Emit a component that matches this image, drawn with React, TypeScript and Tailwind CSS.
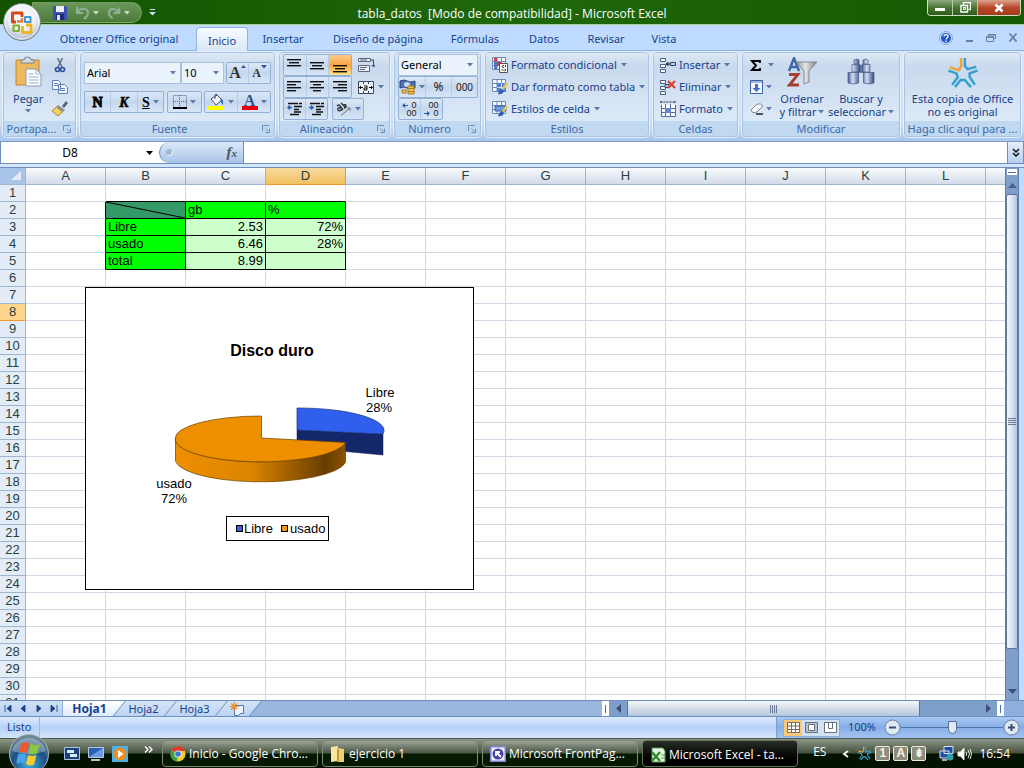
import type { ReactNode } from 'react';

const COLUMNS = ['A', 'B', 'C', 'D', 'E', 'F', 'G', 'H', 'I', 'J', 'K', 'L'];
const ROWS = Array.from({ length: 31 }, (_, i) => i + 1);

const CELLS: Record<string, string> = {
  C2: 'gb',
  D2: '%',
  B3: 'Libre',
  C3: '2.53',
  D3: '72%',
  B4: 'usado',
  C4: '6.46',
  D4: '28%',
  B5: 'total',
  C5: '8.99',
};

const RIBBON_TABS = [
  { label: 'Obtener Office original', width: 'w-[154px]' },
  { label: 'Inicio', width: 'w-[52px]', active: true },
  { label: 'Insertar', width: 'w-[70px]' },
  { label: 'Diseño de página', width: 'w-[120px]' },
  { label: 'Fórmulas', width: 'w-[74px]' },
  { label: 'Datos', width: 'w-[64px]' },
  { label: 'Revisar', width: 'w-[60px]' },
  { label: 'Vista', width: 'w-[56px]' },
];

function Caret({ className = 'text-[#5a7ba8]' }: { className?: string }) {
  return (
    <svg width="6" height="4" viewBox="0 0 6 4" className={`shrink-0 ${className}`}>
      <path d="M0 0h6L3 3.500z" fill="currentColor" />
    </svg>
  );
}

/* ---------- title bar ---------- */

function OfficeOrb() {
  return (
    <button aria-label="Botón de Office" className="absolute top-[2px] left-[2px] z-20 size-10">
      <svg width="40" height="40" viewBox="0 0 40 40">
        <defs>
          <radialGradient id="orb" cx="50%" cy="35%" r="65%">
            <stop offset="0" stopColor="#fff" />
            <stop offset="0.6" stopColor="#e9edf4" />
            <stop offset="1" stopColor="#a9b6ca" />
          </radialGradient>
        </defs>
        <circle cx="20" cy="20" r="18.500" fill="url(#orb)" stroke="#6f8277" />
        <circle cx="20" cy="20" r="17" fill="none" stroke="#fff" strokeOpacity="0.8" />
        <g fill="none" strokeLinejoin="round">
          <path d="M14 20H10.500V11H20v4" stroke="#d9481a" strokeWidth="3" />
          <path d="M20 16v3.500h-5" stroke="#f07a35" strokeWidth="2.400" />
          <path d="M23 15h5.500v5H23z" stroke="#3c9ad6" strokeWidth="2" />
          <path d="M11.500 23.500h5.500v5.500h-5.500z" stroke="#7fb23a" strokeWidth="2.200" />
          <path d="M20.500 24v6.500h8.500V23h-5" stroke="#f2b41c" strokeWidth="2.800" />
        </g>
      </svg>
    </button>
  );
}

function TitleBar() {
  return (
    <header className="relative flex h-[25px] shrink-0 items-center border-b border-[#a9cf90] bg-linear-to-r from-[#145200] via-[#1f680a] to-[#175803]">
      <OfficeOrb />
      <div className="absolute top-[2px] left-8 flex h-[21px] w-[110px] items-center rounded-r-full border border-[#8fae7b]/60 bg-linear-to-b from-[#6a965a] to-[#4b7b3b] pl-5">
        <button aria-label="Guardar" className="mr-[8px]">
          <svg width="14" height="14" viewBox="0 0 14 14">
            <path d="M0 0h13l1 1v13H0z" fill="#3d4fb0" />
            <path d="M3 0h8v6H3z" fill="#e9eefb" />
            <path d="M3 8h8v6H3z" fill="#1f2c78" />
            <path d="M4 9h3v5H4z" fill="#dfe5f8" />
          </svg>
        </button>
        <button aria-label="Deshacer" className="flex items-center gap-[3px]">
          <svg width="15" height="14" viewBox="0 0 15 14" fill="none">
            <path d="M2 1v6h6M3 6c3-5 10-4 10 1 0 3-2 4-4 6" stroke="#8fae93" strokeWidth="2.200" />
          </svg>
          <Caret className="text-[#cbdcc4]" />
        </button>
        <button aria-label="Rehacer" className="ml-[8px] flex items-center gap-[3px]">
          <svg width="14" height="14" viewBox="0 0 15 14" fill="none">
            <path d="M13 1v6H7M12 6C9 1 2 2 2 7c0 3 2 4 4 6" stroke="#8fae93" strokeWidth="2.200" />
          </svg>
          <Caret className="text-[#cbdcc4]" />
        </button>
      </div>
      <button aria-label="Personalizar barra de acceso rápido" className="absolute top-[9px] left-[149px]">
        <svg width="7" height="7" viewBox="0 0 7 7" fill="#c9dcf5">
          <path d="M1 0h5v1H1zM0 3h7L3.500 6.500z" />
        </svg>
      </button>
      <h1 className="w-full pt-1 text-center font-['Open_Sans',sans-serif] text-[12px] leading-4 font-normal text-white">
        tabla_datos&nbsp; [Modo de compatibilidad] - Microsoft Excel
      </h1>
      <div className="absolute top-0 right-[3px] flex h-[16px] overflow-hidden rounded-b border border-t-0 border-[#cfdcc6]">
        <button aria-label="Minimizar" className="flex w-[25px] items-end justify-center border-r border-[#b9c9ad] bg-linear-to-b from-[#8fab80] via-[#4a7535] via-50% to-[#2c5f17] pb-[4px]">
          <span className="h-[3px] w-[10px] bg-white" />
        </button>
        <button aria-label="Restaurar" className="flex w-[25px] items-center justify-center border-r border-[#b9c9ad] bg-linear-to-b from-[#8fab80] via-[#4a7535] via-50% to-[#2c5f17]">
          <svg width="11" height="11" viewBox="0 0 11 11" fill="none" stroke="#fff">
            <path d="M3.500 2.500v-2h7v7h-2M1 3.500h6.500V10H1z" strokeWidth="1.400" />
            <path d="M3.500 5.500h2v2h-2z" />
          </svg>
        </button>
        <button aria-label="Cerrar" className="flex w-[42px] items-center justify-center bg-linear-to-b from-[#dba28c] via-[#b8482b] via-50% to-[#a13a18]">
          <svg width="12" height="10" viewBox="0 0 12 10">
            <path d="M2.500 1.500l7 7M9.500 1.500l-7 7" stroke="#fff" strokeWidth="2.600" />
          </svg>
        </button>
      </div>
    </header>
  );
}

/* ---------- ribbon ---------- */

function RibbonTabs() {
  return (
    <nav className="flex h-[25px] shrink-0 items-end bg-[#bfdbff] pl-[42px]">
      {RIBBON_TABS.map(({ label, width, active }) => (
        <button
          key={label}
          className={`h-[24px] shrink-0 whitespace-nowrap pt-[2px] text-center text-[11px] leading-4 text-[#15428b] ${width} ${
            active ? 'relative top-px rounded-t border border-b-0 border-[#8db2e3] bg-linear-to-b from-[#f6fbff] to-[#dbe6f4]' : ''
          }`}
        >
          {label}
        </button>
      ))}
      <div className="ml-auto flex h-full items-center gap-3 pr-[6px] text-[#6b7f99]">
        <button aria-label="Ayuda">
          <svg width="14" height="14" viewBox="0 0 14 14">
            <circle cx="7" cy="7" r="6.400" fill="#dce8fb" stroke="#7c9fd6" />
            <circle cx="7" cy="7" r="5" fill="#2456c4" />
            <path d="M5 5.500c0-2.500 4-2.500 4 0C9 7 7 7 7 8.500M7 9.500V11" fill="none" stroke="#fff" strokeWidth="1.400" />
          </svg>
        </button>
        <button aria-label="Minimizar libro" className="pt-1">
          <svg width="9" height="6" viewBox="0 0 9 6"><path d="M1 3h7v2H1z" fill="currentColor" /></svg>
        </button>
        <button aria-label="Restaurar libro">
          <svg width="10" height="8" viewBox="0 0 10 8" fill="none" stroke="currentColor">
            <path d="M2.500 2.500v-2h7v4h-2M.5 3h7v4.500h-7z" />
            <path d="M0 3h8M2 .8h8" strokeWidth="1.500" />
          </svg>
        </button>
        <button aria-label="Cerrar libro">
          <svg width="10" height="9" viewBox="0 0 10 9"><path d="M1.500.5l7 8M8.500.5l-7 8" stroke="currentColor" strokeWidth="1.800" /></svg>
        </button>
      </div>
    </nav>
  );
}

function Group({ title, width, launcher, children }: { title: string; width: string; launcher?: boolean; children: ReactNode }) {
  return (
    <section className={`flex h-[85px] flex-col overflow-hidden rounded border border-[#a9c3e3] shadow-[0_0_0_1px_#e6f0fc] ${width}`}>
      <div className="h-[68px] bg-linear-to-b from-[#dde8f5] via-[#c9d9ed] via-20% to-[#dce9f8]">{children}</div>
      <div className="relative flex h-[15px] items-center justify-center bg-[#c1d8f1]">
        <h2 className={`whitespace-nowrap text-[11px] leading-[15px] text-[#3e6aaa] ${launcher ? 'pr-4' : ''}`}>{title}</h2>
        {launcher && (
          <button aria-label={`Más opciones de ${title}`} className="absolute right-[4px]">
            <svg width="8" height="8" viewBox="0 0 8 8" fill="none" stroke="#6790c4">
              <path d="M.5 6V.5H7M3.500 3.500l3 3M7.500 3.500v4h-4" />
            </svg>
          </button>
        )}
      </div>
    </section>
  );
}

function Segment({ children, className = '' }: { children: ReactNode; className?: string }) {
  return (
    <div className={`flex h-[22px] divide-x divide-[#b4cae6] overflow-hidden rounded-xs border border-[#93b0d6] bg-linear-to-b from-[#dce8f6] via-[#c5d7ed] via-50% to-[#d7e6f8] ${className}`}>
      {children}
    </div>
  );
}

function IconButton({ label, active, children }: { label: string; active?: boolean; children: ReactNode }) {
  return (
    <button
      aria-label={label}
      className={`flex flex-1 items-center justify-center gap-[3px] ${active ? 'bg-linear-to-b from-[#fbc98a] via-[#fba53c] via-50% to-[#fde28a]' : ''}`}
    >
      {children}
    </button>
  );
}

function Lines({ rows }: { rows: [number, number, number][] }) {
  return (
    <svg width="15" height="16" viewBox="0 0 15 16" fill="#111">
      {rows.map(([x, y, w]) => (
        <rect key={y} x={x} y={y} width={w} height="1.400" />
      ))}
    </svg>
  );
}

function FormatSelect({ label, value, className }: { label: string; value: string; className: string }) {
  return (
    <label className={`relative flex h-[22px] items-center border border-[#abc1de] bg-[#eaf2fb] ${className}`}>
      <select aria-label={label} className="h-full w-full appearance-none px-[2px] text-[11px] text-black outline-none">
        <option>{value}</option>
      </select>
      <span className="pointer-events-none absolute right-[4px]">
        <Caret />
      </span>
    </label>
  );
}

function ClipboardGroup() {
  return (
    <Group title="Portapa..." width="w-[73px]" launcher>
      <div className="flex justify-between pt-[3px] pr-[7px] pl-[9px]">
        <button className="flex flex-col items-center text-[11px] leading-[13px] text-[#15428b]">
          <svg width="28" height="32" viewBox="0 0 28 32">
            <path d="M2 4h23v25H2z" fill="#eeb95c" stroke="#c08a3a" />
            <path d="M7 7V4h3q0-3 3.500-3T17 4h3v3z" fill="#d4dbe3" stroke="#77818f" />
            <path d="M12 13h10l5 5v12H12z" fill="#fbfdff" stroke="#8a9bb8" />
            <path d="M22 13v5h5M14.500 18h5m-5 3h10m-10 3h10m-10 3h10" fill="none" stroke="#9fb0cc" />
          </svg>
          <span className="pt-1 pb-1">Pegar</span>
          <Caret />
        </button>
        <div className="flex flex-col items-center gap-[7px] pt-[2px]">
          <button aria-label="Cortar">
            <svg width="12" height="15" viewBox="0 0 12 15" fill="none">
              <path d="M3.500 0L8 9M8.500 0L4 9" stroke="#5c6f8c" strokeWidth="1.500" />
              <circle cx="3.500" cy="11.500" r="2" stroke="#274f9e" strokeWidth="1.600" />
              <circle cx="8.500" cy="11.500" r="2" stroke="#274f9e" strokeWidth="1.600" />
            </svg>
          </button>
          <button aria-label="Copiar">
            <svg width="16" height="14" viewBox="0 0 16 14" fill="#f4f8ff" stroke="#5e7fb8">
              <path d="M.5.5h6l2 2v7h-8zM6.500 4.500h6l3 3v6h-9z" />
              <path d="M2 3.500h4m-4 2h4M8 8.500h5m-5 2h5" />
            </svg>
          </button>
          <button aria-label="Copiar formato">
            <svg width="16" height="15" viewBox="0 0 16 15">
              <path d="M10 5l4-5 2 2-4 5z" fill="#51638b" />
              <path d="M6 4l7 5-2 2-7-5z" fill="#8b909c" />
              <path d="M4.500 6l6 5L6 15 0 10z" fill="#f0d26b" stroke="#a98420" />
            </svg>
          </button>
        </div>
      </div>
    </Group>
  );
}

function FontGroup() {
  return (
    <Group title="Fuente" width="w-[195px]" launcher>
      <div className="flex flex-col gap-[7px] px-[3px] pt-[9px]">
        <div className="flex justify-between">
          <div className="flex">
            <FormatSelect label="Fuente" value="Arial" className="w-[97px]" />
            <FormatSelect label="Tamaño de fuente" value="10" className="w-[43px]" />
          </div>
          <Segment className="w-[45px] font-['Liberation_Serif',serif] font-bold text-[#333]">
            <IconButton label="Aumentar tamaño">
              <span className="flex items-start text-[16px] leading-4">A<svg width="5" height="3" viewBox="0 0 5 3"><path d="M0 3h5L2.500 0z" fill="#33539a" /></svg></span>
            </IconButton>
            <IconButton label="Disminuir tamaño">
              <span className="flex items-start text-[12px] leading-4">A<Caret className="text-[#33539a]" /></span>
            </IconButton>
          </Segment>
        </div>
        <div className="flex justify-between">
          <Segment className="w-[80px] font-['Liberation_Serif',serif] text-[14px] font-bold text-black">
            <IconButton label="Negrita"><span className="[-webkit-text-stroke:1px]">N</span></IconButton>
            <IconButton label="Cursiva"><i className="[-webkit-text-stroke:0.5px]">K</i></IconButton>
            <IconButton label="Subrayado"><u>S</u><Caret /></IconButton>
          </Segment>
          <Segment className="w-[35px]">
            <IconButton label="Bordes">
              <svg width="14" height="14" viewBox="0 0 14 14" fill="none" stroke="#51617c">
                <path d="M.5.5h13v12H.5zM6.500 0v13M0 6.500h14" strokeDasharray="1 1" />
                <path d="M0 13h14" stroke="#000" strokeWidth="2" />
              </svg>
              <Caret />
            </IconButton>
          </Segment>
          <Segment className="w-[67px]">
            <IconButton label="Color de relleno">
              <svg width="17" height="16" viewBox="0 0 17 16">
                <path d="M3 5l6-4 5 5-6 5z" fill="#f3f6fb" stroke="#44516b" />
                <path d="M7 5V1q1-2 2 0" fill="none" stroke="#44516b" />
                <path d="M12 4q4 1 3 7l-2-3z" fill="#2b66b8" />
                <path d="M0 12h16v4H0z" fill="#ff0" />
              </svg>
              <Caret />
            </IconButton>
            <IconButton label="Color de fuente">
              <span className="flex h-4 w-4 items-start justify-center border-b-4 border-red-600 font-['Liberation_Serif',serif] text-[16px] leading-[13px] font-bold text-[#33538f]">A</span>
              <Caret />
            </IconButton>
          </Segment>
        </div>
      </div>
    </Group>
  );
}

function AlignmentGroup() {
  return (
    <Group title="Alineación" width="w-[111px]" launcher>
      <div className="flex flex-col px-[3px] pt-px">
        <div className="flex gap-[6px]">
          <Segment className="w-[69px]">
            <IconButton label="Alinear arriba"><Lines rows={[[0, 2, 14], [2, 5, 10], [0, 8, 14]]} /></IconButton>
            <IconButton label="Alinear en el medio"><Lines rows={[[0, 5, 14], [2, 8, 10], [0, 11, 14]]} /></IconButton>
            <IconButton label="Alinear abajo" active><Lines rows={[[0, 8, 14], [2, 11, 10], [0, 14, 14]]} /></IconButton>
          </Segment>
          <button aria-label="Ajustar texto">
            <svg width="17" height="16" viewBox="0 0 17 16" fill="#eef4fd" stroke="#5b6678">
              <path d="M.5 1.500h12v3H.5zM.5 8.500h11v6H.5z" />
              <path d="M2 3h7M2 10.500h7m-7 2h5" />
              <path d="M13 3h2.500v6M13.500 8l2 2 1.500-2" fill="none" stroke="#33466d" />
            </svg>
          </button>
        </div>
        <div className="flex gap-[6px]">
          <Segment className="w-[69px]">
            <IconButton label="Alinear a la izquierda"><Lines rows={[[0, 2, 14], [0, 5, 9], [0, 8, 14], [0, 11, 9]]} /></IconButton>
            <IconButton label="Centrar"><Lines rows={[[0, 2, 14], [3, 5, 8], [0, 8, 14], [3, 11, 8]]} /></IconButton>
            <IconButton label="Alinear a la derecha"><Lines rows={[[0, 2, 14], [5, 5, 9], [0, 8, 14], [5, 11, 9]]} /></IconButton>
          </Segment>
          <button aria-label="Combinar y centrar" className="flex items-center gap-1">
            <svg width="16" height="13" viewBox="0 0 16 13" fill="none" stroke="#39465c">
              <path d="M.5.5h15v12H.5zM5.500 0v3m5-3v3m-5 7v3m5-3v3" fill="#eef4fd" />
              <path d="M1 6.500h4m6 0h4M6 5h3v4H6V7h3M3 5L1.500 6.500 3 8m10-3l1.500 1.500L13 8" stroke="#111" />
            </svg>
            <Caret />
          </button>
        </div>
        <div className="flex gap-1">
          <Segment className="w-[45px]">
            {['M5 5.500H1m2-2l-2 2 2 2', 'M0 5.500h4m-2-2l2 2-2 2'].map((arrow, i) => (
              <IconButton key={arrow} label={i ? 'Aumentar sangría' : 'Disminuir sangría'}>
                <svg width="16" height="14" viewBox="0 0 16 14" fill="none" stroke="#111" strokeWidth="1.500">
                  <path d="M1 1.500h14M7 4.500h8M7 7.500h5M7 10h7M3 12.500h9" strokeDasharray="10 1" />
                  <path d={arrow} stroke="#2d5fae" />
                </svg>
              </IconButton>
            ))}
          </Segment>
          <Segment className="w-[32px]">
            <IconButton label="Orientación">
              <svg width="17" height="14" viewBox="0 0 17 14" fill="none" stroke="#333" className="shrink-0">
                <path d="M6 13.500L15 6m0 0h-3m3 0v3" stroke="#777" />
                <path d="M2 4q2-2 3 0l3 4M6 6Q2 5 3 8q2 2 4-1M6 1l5 5M8 3q3-1 3 1t-2 2" strokeWidth="1.400" />
              </svg>
              <Caret />
            </IconButton>
          </Segment>
        </div>
      </div>
    </Group>
  );
}

function NumberGroup() {
  return (
    <Group title="Número" width="w-[87px]" launcher>
      <div className="flex flex-col px-[3px] pt-px">
        <FormatSelect label="Formato de número" value="General" className="w-[80px]" />
        <Segment className="w-[80px] text-[11px] text-[#222]">
          <IconButton label="Formato de contabilidad">
            <svg width="17" height="16" viewBox="0 0 17 16" className="shrink-0">
              <path d="M1 2q4-2 7 0t8 0v7q-5 2-8 0T1 9z" fill="#4a6fae" stroke="#2c4680" />
              <ellipse cx="8" cy="5.500" rx="3" ry="2.500" fill="#c9d9f2" />
              <path d="M3 11h4v3H3zM9 7h6v8H9z" fill="#f2c34c" stroke="#a8781c" />
              <path d="M9 9.500h6m-6 3h6" stroke="#a8781c" />
            </svg>
            <Caret />
          </IconButton>
          <IconButton label="Estilo porcentual"><span className="text-[12px]">%</span></IconButton>
          <IconButton label="Estilo millares"><span className="text-[10px]">000</span></IconButton>
        </Segment>
        <Segment className="w-[45px] font-['Liberation_Sans',sans-serif] text-[9px] leading-[8px] text-[#222]">
          <IconButton label="Aumentar decimales">
            <span className="flex flex-col items-end">
              <span className="flex items-center gap-[3px]"><svg width="6" height="5" viewBox="0 0 6 5"><path d="M0 2.500L3 0v2h3v1H3v2z" fill="#2d5fae" /></svg>0</span>
              <span>00</span>
            </span>
          </IconButton>
          <IconButton label="Disminuir decimales">
            <span className="flex flex-col items-end">
              <span>00</span>
              <span className="flex items-center gap-[3px]"><svg width="6" height="5" viewBox="0 0 6 5"><path d="M6 2.500L3 0v2H0v1h3v2z" fill="#2d5fae" /></svg>0</span>
            </span>
          </IconButton>
        </Segment>
      </div>
    </Group>
  );
}

function MenuButton({ icon, label }: { icon: ReactNode; label: string }) {
  return (
    <button className="flex h-[22px] items-center whitespace-nowrap text-[11px] text-[#15428b]">
      {icon}
      <span className="mr-1 ml-[3px]">{label}</span>
      <Caret />
    </button>
  );
}

function StylesGroup() {
  const sheet = <path d="M.5.5h13v12H.5zM5 0v13M9.500 0v13M0 4.500h14M0 8.500h14" fill="#f4f8ff" stroke="#6f87b5" />;
  return (
    <Group title="Estilos" width="w-[164px]">
      <div className="flex flex-col pt-px pl-[6px]">
        <MenuButton
          label="Formato condicional"
          icon={
            <svg width="16" height="16" viewBox="0 0 16 16">
              {sheet}
              <path d="M2 1h3v3H2zM5 5h4v4H5z" fill="#d23b34" />
              <path d="M2 5h3v7H2z" fill="#4b76c4" />
              <path d="M7.500 6.500h8v9h-8z" fill="#fff" stroke="#555" />
              <path d="M12 8l-2 1.500 2 1.500M9.500 13h2m2-5v2m-1 2l1.500 1-1.500 1" fill="none" stroke="#222" />
            </svg>
          }
        />
        <MenuButton
          label="Dar formato como tabla"
          icon={
            <svg width="16" height="16" viewBox="0 0 16 16">
              {sheet}
              <path d="M5 4h9v9H5z" fill="#4f80d6" />
              <path d="M9.500 4v9M5 8.500h9" stroke="#cfe0fa" />
              <path d="M15 4l-5 7" stroke="#e3c54e" strokeWidth="2.500" />
              <path d="M6 15q1-4 4-5l2 2q-2 4-6 3z" fill="#2d5bb5" />
            </svg>
          }
        />
        <MenuButton
          label="Estilos de celda"
          icon={
            <svg width="16" height="16" viewBox="0 0 16 16">
              {sheet}
              <path d="M3 5h11v5H3z" fill="#6e9ae0" stroke="#3c62a8" />
              <path d="M15 5l-5 7" stroke="#e3c54e" strokeWidth="2.500" />
              <path d="M6 15q1-4 4-5l2 2q-2 4-6 3z" fill="#2d5bb5" />
            </svg>
          }
        />
      </div>
    </Group>
  );
}

function CellsGroup() {
  const rows = <path d="M.5.5h5v3h-5zM.5 6.500h5v3h-5zM.5 11.500h5v3h-5z" fill="#fff" stroke="#4a5d82" />;
  return (
    <Group title="Celdas" width="w-[85px]">
      <div className="flex flex-col pt-px pl-[6px]">
        <MenuButton
          label="Insertar"
          icon={
            <svg width="16" height="15" viewBox="0 0 16 15">
              {rows}
              <path d="M10.500 4.500h5v3h-5z" fill="#b9cdef" stroke="#33466d" />
              <path d="M6 6h4M8.500 4L6.500 6l2 2" stroke="#000" fill="none" />
            </svg>
          }
        />
        <MenuButton
          label="Eliminar"
          icon={
            <svg width="16" height="15" viewBox="0 0 16 15">
              {rows}
              <path d="M5 4.500h4v3H5z" fill="#b9cdef" stroke="#33466d" />
              <path d="M8 1l7 7M15 1L8 8" stroke="#e0402e" strokeWidth="2.200" />
            </svg>
          }
        />
        <MenuButton
          label="Formato"
          icon={
            <svg width="16" height="16" viewBox="0 0 16 16" fill="none">
              <path d="M1.500 3.500h14v12h-14z" fill="#f7faff" />
              <path d="M.5 1h15M1 0v3m14-3v3" stroke="#333" strokeDasharray="2 1" />
              <path d="M1.500 4v11.500h14V4M5.500 3v13m5-13v13M1 7.500h15m-15 4h15" stroke="#596b90" />
              <path d="M5 7h6v5H5z" fill="#6489cf" />
            </svg>
          }
        />
      </div>
    </Group>
  );
}

function EditingGroup() {
  return (
    <Group title="Modificar" width="w-[158px]">
      <div className="flex pt-px pl-[7px]">
        <div className="flex w-[27px] flex-col">
          <button aria-label="Autosuma" className="flex h-[22px] items-center justify-between pr-[3px]">
            <svg width="12" height="11" viewBox="0 0 12 11"><path d="M10 3V1H2l4 4.500L2 10h8V8" fill="none" stroke="#000" strokeWidth="1.900" /></svg>
            <Caret />
          </button>
          <button aria-label="Rellenar" className="flex h-[22px] items-center justify-between pr-[5px]">
            <svg width="13" height="14" viewBox="0 0 13 14">
              <path d="M.5.5h12v13H.5z" fill="#f4f8ff" stroke="#3e5f9f" />
              <path d="M1 1h11v2H1z" fill="#9fb7dc" />
              <path d="M5 4h3v4h2.500l-4 4-4-4H5z" fill="#3c6fd0" />
            </svg>
            <Caret />
          </button>
          <button aria-label="Borrar" className="flex h-[22px] items-center justify-between pr-[5px]">
            <svg width="14" height="12" viewBox="0 0 14 12">
              <path d="M1 7l6-6q4-1 6 2l-6 6q-5 2-6-2z" fill="#f3f5f9" stroke="#7c8797" />
              <path d="M6 11h7" stroke="#222" strokeWidth="1.500" />
            </svg>
            <Caret />
          </button>
        </div>
        <button className="flex w-[50px] flex-col items-center whitespace-nowrap pt-[3px] text-[11px] leading-[13px] text-[#15428b]">
          <svg width="30" height="30" viewBox="0 0 30 30">
            <defs>
              <linearGradient id="funnel">
                <stop offset="0" stopColor="#8d9096" />
                <stop offset="0.450" stopColor="#e3e4e6" />
                <stop offset="1" stopColor="#7f8288" />
              </linearGradient>
            </defs>
            <path d="M2 14L7 1l5 13M4 10h6" fill="none" stroke="#4167ad" strokeWidth="2.500" />
            <path d="M2 17.500h9L2.500 28H12" fill="none" stroke="#a63f33" strokeWidth="2.800" />
            <path d="M9 5h21l-8 9v11l-5 2V14z" fill="url(#funnel)" stroke="#73777e" strokeWidth="0.800" />
          </svg>
          <span className="pt-[5px]">Ordenar</span>
          <span className="flex items-center gap-[2px]">y filtrar <Caret /></span>
        </button>
        <button className="flex w-[68px] flex-col items-center whitespace-nowrap pt-[3px] text-[11px] leading-[13px] text-[#15428b]">
          <svg width="28" height="30" viewBox="0 0 28 30">
            <defs>
              <linearGradient id="lens">
                <stop offset="0" stopColor="#4a629a" />
                <stop offset="0.400" stopColor="#d3dff4" />
                <stop offset="1" stopColor="#344b82" />
              </linearGradient>
            </defs>
            <path d="M11 8h6v8h-6z" fill="#6f87b8" />
            <g fill="url(#lens)" stroke="#35497a" strokeWidth="0.600">
              <path d="M7 3q2.500-2 5 0v4H7zM5 7.500h8V15H5zM1 15.500h10.500V26q-5 2-10.500 0z" />
              <path d="M16 3q2.500-2 5 0v4h-5zM15 7.500h8V15h-8zM16.500 15.500H27V26q-5 2-10.500 0z" />
            </g>
          </svg>
          <span className="pt-[5px]">Buscar y</span>
          <span className="flex items-center gap-[2px]">seleccionar <Caret /></span>
        </button>
      </div>
    </Group>
  );
}

function GenuineStar({ size }: { size: number }) {
  return (
    <svg width={size} height={size} viewBox="0 0 34 32" fill="none" stroke="#35a0cf" strokeWidth="2.600">
      <path d="M19 0V8.500L22 12l9-2.500" />
      <path d="M32.500 13.500L24 16.500V20l5.500 8.500" />
      <path d="M25.500 31L19 23.500h-4.500L8.500 31" />
      <path d="M5.500 28.500l6-8L10 16.500l-8.500-3" />
      <path d="M15 0v9l-2.500 4L3 10" stroke="#f0a23c" />
    </svg>
  );
}

function GenuineGroup() {
  return (
    <Group title="Haga clic aquí para ..." width="min-w-[117px] flex-1">
      <button className="flex w-full flex-col items-center whitespace-nowrap pt-1 text-[11px] leading-[13px] text-[#15428b]">
        <GenuineStar size={32} />
        <span className="pt-[3px]">Esta copia de Office</span>
        <span>no es original</span>
      </button>
    </Group>
  );
}

function Ribbon() {
  return (
    <div className="flex h-[92px] shrink-0 gap-1 border-t border-b border-t-[#8db2e3] border-b-[#7f9dc4] bg-linear-to-b from-[#dbe6f4] via-[#cfe0f4] via-80% to-[#a8c6ec] px-[3px] pt-px">
      <ClipboardGroup />
      <FontGroup />
      <AlignmentGroup />
      <NumberGroup />
      <StylesGroup />
      <CellsGroup />
      <EditingGroup />
      <GenuineGroup />
    </div>
  );
}

function FormulaBar() {
  return (
    <div className="flex h-[26px] shrink-0 border-b border-[#6d8fbd] bg-[#d6e6fa] pb-[3px]">
      <div className="flex flex-1 border-b border-[#6d8fbd] bg-white">
        <div className="flex w-[159px] items-center border-l border-[#6d8fbd] pr-1">
          <input aria-label="Cuadro de nombres" defaultValue="D8" className="min-w-0 flex-1 pr-1 text-center text-[12px] text-black outline-none" />
          <button aria-label="Lista de nombres" className="flex w-3 justify-center">
            <svg width="7" height="4" viewBox="0 0 7 4"><path d="M0 0h7L3.500 4z" /></svg>
          </button>
        </div>
        <div className="flex w-[85px] items-center justify-between rounded-l-full border border-y-0 border-[#6d8fbd] bg-linear-to-b from-[#dbe8f9] to-[#a9c4e8] pr-[6px] pl-[6px]">
          <span className="size-[7px] rounded-full bg-[#a5b7d1] shadow-[inset_-1px_-1px_1px_#eef4fd]" />
          <button aria-label="Insertar función" className="font-['Liberation_Serif',serif] text-[15px] leading-4 font-bold text-[#4c5560] italic">
            f<span className="text-[11px]">x</span>
          </button>
        </div>
        <input aria-label="Barra de fórmulas" className="min-w-0 flex-1 bg-white px-1 text-[12px] outline-none" />
        <button aria-label="Expandir barra de fórmulas" className="flex w-[17px] items-center justify-center border border-y-0 border-[#6d8fbd] bg-linear-to-b from-[#e4eefb] to-[#b7cfef]">
          <svg width="8" height="9" viewBox="0 0 8 9" fill="none" stroke="#111" strokeWidth="1.500"><path d="M1 1l3 3 3-3M1 5l3 3 3-3" /></svg>
        </button>
      </div>
    </div>
  );
}

/* ---------- sheet ---------- */

function cellStyle(col: string, row: number) {
  const inTable = 'BCD'.includes(col) && row >= 2 && row <= 5;
  if (inTable) {
    const fill = col === 'B' && row === 2 ? 'bg-[#339966]' : col === 'B' || row === 2 ? 'bg-[#00ff00]' : 'bg-[#ccffcc]';
    const align = col === 'B' || row === 2 ? 'text-left' : 'text-right';
    return `border-black ${fill} ${align}`;
  }
  const bottom = row === 1 && 'BCD'.includes(col) ? 'border-b-black' : 'border-b-[#d0d7e5]';
  const right = col === 'A' && row >= 2 && row <= 5 ? 'border-r-black' : 'border-r-[#d0d7e5]';
  return `${bottom} ${right}`;
}

function DiskChart() {
  return (
    <figure className="absolute top-[119px] left-[85px] border border-black bg-white">
      <svg width="387" height="301" viewBox="1 1 387 301" role="img" aria-label="Disco duro" className="font-['Liberation_Sans',Arial,sans-serif] text-[13px]">
        <defs>
          <linearGradient id="rim">
            <stop offset="0" stopColor="#ee8f00" />
            <stop offset="0.450" stopColor="#dc8400" />
            <stop offset="0.880" stopColor="#673d00" />
            <stop offset="1" stopColor="#8a5200" />
          </linearGradient>
        </defs>
        <text x="187" y="69" textAnchor="middle" className="text-[16px] font-bold">Disco duro</text>
        <path d="M212 143L298 147V168L212 160z" fill="#14276b" stroke="#0d1b50" strokeWidth="0.500" />
        <path d="M212 143V121A86 22.500 0 0 1 298 147z" fill="#2f5fec" stroke="#1b2f7c" strokeWidth="0.700" />
        <path d="M90.500 151A85.500 22.500 0 0 0 260.500 155.500V175.500A85.500 22.500 0 0 1 90.500 171z" fill="url(#rim)" stroke="#6b4200" strokeWidth="0.700" />
        <path d="M176.500 151V129A86 22 0 0 0 90.500 151A85.500 22.500 0 0 0 260.500 155.500z" fill="#ee8f00" stroke="#6b4200" strokeWidth="0.700" />
        <text x="295" y="110" textAnchor="middle">Libre</text>
        <text x="294" y="125" textAnchor="middle">28%</text>
        <text x="89" y="201" textAnchor="middle">usado</text>
        <text x="89" y="216" textAnchor="middle">72%</text>
        <rect x="141.500" y="229.500" width="102" height="24" fill="#fff" stroke="#000" />
        <rect x="151.500" y="238.500" width="6" height="6" fill="#3c5fe8" stroke="#000" />
        <text x="159" y="246">Libre</text>
        <rect x="196.500" y="238.500" width="6" height="6" fill="#ee9a1a" stroke="#000" />
        <text x="205" y="246">usado</text>
      </svg>
    </figure>
  );
}

function Sheet() {
  return (
    <div className="relative min-w-0 flex-1 overflow-hidden bg-white">
      <table className="w-full table-fixed border-separate border-spacing-0 font-['Liberation_Sans',Arial,sans-serif] text-[13px] leading-4 text-black">
        <colgroup>
          <col className="w-[26px]" />
          {COLUMNS.map((col) => <col key={col} className="w-[80px]" />)}
          <col />
        </colgroup>
        <thead>
          <tr className="h-[17px] text-[#27413e]">
            <th className="border-r border-b border-[#9eb6ce] bg-[#a9c4e9] p-0">
              <svg width="10" height="10" viewBox="0 0 10 10" className="mr-1 ml-auto"><path d="M10 0v9H0z" fill="#e4ecf7" /></svg>
            </th>
            {COLUMNS.map((col) => (
              <th
                key={col}
                scope="col"
                className={`border-r border-b p-0 font-normal ${
                  col === 'D' ? 'border-[#f29536] bg-linear-to-b from-[#f9d99f] to-[#f1c15f]' : 'border-[#9eb6ce] bg-linear-to-b from-[#f9fcfd] to-[#d3dbe9]'
                }`}
              >
                {col}
              </th>
            ))}
            <th className="border-b border-[#9eb6ce] bg-linear-to-b from-[#f9fcfd] to-[#d3dbe9] p-0" />
          </tr>
        </thead>
        <tbody>
          {ROWS.map((row) => (
            <tr key={row} className="h-[17px]">
              <th
                scope="row"
                className={`border-r border-b p-0 font-normal text-[#27413e] ${row === 8 ? 'border-[#f29536] bg-[#ffd58d]' : 'border-[#9eb6ce] bg-[#e4ecf7]'}`}
              >
                {row}
              </th>
              {COLUMNS.map((col) => (
                <td key={col} className={`border-r border-b px-[2px] py-0 ${cellStyle(col, row)} ${col === 'B' && row === 2 ? 'relative' : ''}`}>
                  {CELLS[col + row]}
                  {col === 'B' && row === 2 && (
                    <svg className="absolute inset-0 size-full" viewBox="0 0 79 16" preserveAspectRatio="none">
                      <path d="M0 0l79 16" stroke="#000" />
                    </svg>
                  )}
                </td>
              ))}
              <td className="border-b border-[#d0d7e5] p-0" />
            </tr>
          ))}
        </tbody>
      </table>
      <DiskChart />
    </div>
  );
}

function VerticalScroll() {
  return (
    <div className="flex w-[14px] shrink-0 flex-col border-x border-[#5d7fb5] bg-[#7f9fcb]">
      <div className="flex h-[8px] items-center justify-center border border-[#7f9fcb] bg-white">
        <span className="h-px w-2 bg-[#4d6fa8]" />
      </div>
      <button aria-label="Desplazar arriba" className="flex h-[18px] items-center justify-center">
        <svg width="9" height="5" viewBox="0 0 9 5"><path d="M0 5h9L4.500 0z" fill="#4a5f8a" /></svg>
      </button>
      <div className="flex-1">
        <div className="flex h-[93%] flex-col items-center justify-center gap-px rounded-xs border border-[#5f7396] bg-linear-to-r from-[#f3f7fc] via-[#dbe4ef] to-[#b4c6dc]">
          {[0, 1, 2, 3].map((n) => <span key={n} className="h-px w-2 bg-[#6b7d99]" />)}
        </div>
      </div>
      <button aria-label="Desplazar abajo" className="flex h-[17px] items-center justify-center">
        <svg width="9" height="5" viewBox="0 0 9 5"><path d="M0 0h9L4.500 5z" fill="#3c4f78" /></svg>
      </button>
    </div>
  );
}

function SheetTab({ width, active, label, children }: { width: string; active?: boolean; label?: string; children: ReactNode }) {
  return (
    <button aria-label={label} className={`relative flex items-center justify-center pr-1 text-[#15428b] ${width}`}>
      <span
        className={`absolute inset-y-0 right-0 -skew-x-[39deg] border-r border-[#6f8fc0] ${
          active ? '-left-3 bg-linear-to-b from-white to-[#e0ebfb]' : 'left-0 bg-linear-to-b from-[#d5e4f8] to-[#bdd3f2]'
        }`}
      />
      <span className={`relative leading-4 ${active ? 'text-[12px] font-bold' : 'text-[11px]'}`}>{children}</span>
    </button>
  );
}

function SheetBar() {
  const arrows = [
    { label: 'Primera hoja', d: 'M1 0v7M7 0v7L3 3.500z' },
    { label: 'Hoja anterior', d: 'M6 0v7L2 3.500z' },
    { label: 'Hoja siguiente', d: 'M2 0v7l4-3.500z' },
    { label: 'Última hoja', d: 'M1 0v7l4-3.500zM7 0v7' },
  ];
  return (
    <div className="flex h-[17px] shrink-0 border-y border-[#6d8fbd] bg-[#9ab7de]">
      <div className="z-10 flex w-[63px] items-center justify-around border-r border-[#8eaedb] bg-linear-to-b from-[#cfe0f8] to-[#b9d1f3]">
        {arrows.map(({ label, d }) => (
          <button key={label} aria-label={label}>
            <svg width="8" height="7" viewBox="0 0 8 7"><path d={d} fill="#1c3f86" stroke="#1c3f86" strokeWidth="0.800" /></svg>
          </button>
        ))}
      </div>
      <div className="flex flex-1 overflow-hidden">
        <SheetTab width="w-[57px]" active>Hoja1</SheetTab>
        <SheetTab width="w-[51px]">Hoja2</SheetTab>
        <SheetTab width="w-[51px]">Hoja3</SheetTab>
        <SheetTab width="w-[34px]" label="Insertar hoja de cálculo">
          <svg width="16" height="14" viewBox="0 0 16 14">
            <path d="M5.500 3.500h9v8h-3l-2 2h-4z" fill="#eef4fe" stroke="#5b78ae" />
            <path d="M5 0v9M.5 4.500h9M2 1.500l6 6m0-6l-6 6" stroke="#e88f28" strokeWidth="1.200" />
          </svg>
        </SheetTab>
      </div>
      <div className="flex w-[402px] bg-[#7f9fcb]">
        <div className="flex w-[7px] items-center justify-center bg-white"><span className="h-2 w-px bg-[#4d6fa8]" /></div>
        <button aria-label="Desplazar a la izquierda" className="flex w-[18px] items-center justify-center">
          <svg width="5" height="9" viewBox="0 0 5 9"><path d="M5 0v9L0 4.500z" fill="#3c4f78" /></svg>
        </button>
        <div className="flex w-[293px] items-center justify-center gap-px border-x border-[#5f7396] bg-linear-to-b from-[#f3f7fc] via-[#d5deea] to-[#b4c6dc]">
          {[0, 1, 2, 3].map((n) => <span key={n} className="h-2 w-px bg-[#6b7d99]" />)}
        </div>
        <div className="flex-1" />
        <button aria-label="Desplazar a la derecha" className="flex w-[18px] items-center justify-center">
          <svg width="5" height="9" viewBox="0 0 5 9"><path d="M0 0v9l5-4.500z" fill="#3c4f78" /></svg>
        </button>
        <div className="flex w-[7px] items-center justify-center bg-white"><span className="h-2 w-px bg-[#4d6fa8]" /></div>
      </div>
      <div className="w-[20px] bg-[#8fb0df]" />
    </div>
  );
}

function ZoomButton({ label, d }: { label: string; d: string }) {
  return (
    <button aria-label={label}>
      <svg width="17" height="17" viewBox="0 0 17 17" fill="none">
        <circle cx="8.500" cy="8.500" r="7.500" fill="#dfe9f6" stroke="#6b7f9d" />
        <path d={d} stroke="#3c4f6e" strokeWidth="2" />
      </svg>
    </button>
  );
}

function StatusBar() {
  return (
    <footer className="flex h-[21px] shrink-0 items-center bg-linear-to-b from-[#dcebff] via-[#b6d1f6] via-50% to-[#d5e5fb] text-[11px] text-[#15428b]">
      <div className="flex h-full w-[40px] items-center border-r border-[#9dbbe4] pl-[7px]">Listo</div>
      <div className="ml-auto flex h-full items-center border-l border-[#7d9fd0] bg-linear-to-b from-[#a9c9f5] via-[#86aee6] to-[#a3c4f2] pl-[6px]">
        <div className="flex h-[18px] border border-[#8badd9]">
          <button aria-label="Normal" className="flex w-[18px] items-center justify-center bg-[#fdc977]">
            <svg width="13" height="11" viewBox="0 0 13 11" fill="#fff" stroke="#7a6a4c"><path d="M.5.500h12v10H.5zM4.500 0v11m4-11v11M0 4h13M0 7.500h13" /></svg>
          </button>
          <button aria-label="Diseño de página" className="flex w-[19px] items-center justify-center bg-[#d3e1f4]">
            <svg width="13" height="11" viewBox="0 0 13 11" fill="#b9c2cf" stroke="#66707f"><path d="M.5.500h12v10H.5z" /><path d="M3.500 2.500h6v6h-6z" fill="#fff" /></svg>
          </button>
          <button aria-label="Vista previa de salto de página" className="flex w-[18px] items-center justify-center bg-[#d3e1f4]">
            <svg width="13" height="11" viewBox="0 0 13 11" fill="#fff" stroke="#66707f"><path d="M.5.500h12v10H.5zM4.500.500h4v6h-4zM8.500.500v6" /></svg>
          </button>
        </div>
        <button className="w-[44px] text-center text-[11px]">100%</button>
        <ZoomButton label="Alejar" d="M5 8.500h7" />
        <input
          type="range"
          aria-label="Zoom"
          className="h-4 w-[102px] appearance-none bg-transparent [&::-webkit-slider-runnable-track]:h-px [&::-webkit-slider-runnable-track]:bg-[#4f71a8] [&::-webkit-slider-thumb]:-mt-[6px] [&::-webkit-slider-thumb]:h-[13px] [&::-webkit-slider-thumb]:w-[9px] [&::-webkit-slider-thumb]:appearance-none [&::-webkit-slider-thumb]:rounded-b-full [&::-webkit-slider-thumb]:border [&::-webkit-slider-thumb]:border-[#5a6f92] [&::-webkit-slider-thumb]:bg-[#dfe9f6]"
        />
        <ZoomButton label="Acercar" d="M5 8.500h7M8.500 5v7" />
        <span className="w-1" />
      </div>
    </footer>
  );
}

/* ---------- taskbar ---------- */

const TASKS = [
  {
    label: 'Inicio - Google Chro...',
    icon: (
      <svg width="16" height="16" viewBox="0 0 16 16">
        <circle cx="8" cy="8" r="7.500" fill="#f6c92c" />
        <path d="M8 8L1.500 4.200A7.500 7.500 0 0 1 15 5H8z" fill="#dc3b2d" />
        <path d="M8 8l-1 7.500A7.500 7.500 0 0 1 1.500 4.200z" fill="#3f9d45" />
        <circle cx="8" cy="8" r="3.600" fill="#fff" />
        <circle cx="8" cy="8" r="2.800" fill="#3b78d8" />
      </svg>
    ),
  },
  {
    label: 'ejercicio 1',
    icon: (
      <svg width="16" height="16" viewBox="0 0 16 16">
        <path d="M1 1l7-1v15l-7 1z" fill="#f8e6a0" />
        <path d="M7 2l7 1v13H7z" fill="#f0d070" />
        <path d="M7 2l2 2v12l-2-1z" fill="#c99a34" />
      </svg>
    ),
  },
  {
    label: 'Microsoft FrontPag...',
    icon: (
      <svg width="16" height="16" viewBox="0 0 16 16">
        <path d="M0 0h16v16H0z" fill="#8583d8" />
        <path d="M1.500 1.500h13v13h-13z" fill="#f1f1fd" />
        <circle cx="8" cy="8" r="5.500" fill="#4644a8" />
        <path d="M6 10V6h4M6 6l5 5" stroke="#fff" strokeWidth="1.800" fill="none" />
      </svg>
    ),
  },
  {
    label: 'Microsoft Excel - ta...',
    active: true,
    icon: (
      <svg width="16" height="16" viewBox="0 0 16 16">
        <path d="M2 1h11l2 3v11H2z" fill="#e7f4e4" stroke="#4d9d45" />
        <path d="M2 5l8 9M10 5l-8 9" stroke="#2f8a2c" strokeWidth="2.400" />
        <path d="M11 8h4m-4 3h4" stroke="#4d9d45" />
      </svg>
    ),
  },
];

function StartOrb() {
  return (
    <button aria-label="Inicio" className="absolute -top-[6px] left-[8px] z-10 size-[42px]">
      <svg width="42" height="42" viewBox="0 0 42 42">
        <defs>
          <radialGradient id="start" cx="50%" cy="75%" r="70%">
            <stop offset="0" stopColor="#3fb5e0" />
            <stop offset="0.600" stopColor="#1d4f83" />
            <stop offset="1" stopColor="#6a8795" />
          </radialGradient>
        </defs>
        <circle cx="21" cy="21" r="19.500" fill="url(#start)" stroke="#a7b7b5" />
        <path d="M4 18A17.500 17.500 0 0 1 38 18Q21 24 4 18z" fill="#fff" fillOpacity="0.300" />
        <path d="M13 11q4-3 8-1l-2 10q-4-2-8 0z" fill="#ec5a2a" />
        <path d="M22.500 10.500q5 3 9.500 0l-3 10q-4 2-8.500 0z" fill="#8cc63e" />
        <path d="M10 21.500q4-2 8.500 0l-2 9q-4-2-8 0z" fill="#4aa5e8" />
        <path d="M20 22q4 2 8.500 0l-2.500 9.500q-4 2-8-.5z" fill="#fcc92e" />
      </svg>
    </button>
  );
}

function Taskbar() {
  return (
    <div className="relative flex h-[30px] shrink-0 items-center border-t border-[#4a574f] bg-linear-to-b from-[#8f988a] via-[#46513f] via-48% to-[#031300] to-52% font-['Open_Sans',sans-serif] text-white">
      <StartOrb />
      <div className="ml-[64px] flex w-[98px] shrink-0 items-center gap-[8px]">
        <button aria-label="Cambiar de ventana">
          <svg width="16" height="14" viewBox="0 0 16 14"><path d="M.5.500h15v12H.5z" fill="#1c4277" stroke="#a9c3e5" /><path d="M3 3h7v3H3zM6 7h7v3H6z" fill="#dbe8f7" /></svg>
        </button>
        <button aria-label="Mostrar escritorio">
          <svg width="16" height="14" viewBox="0 0 16 14"><path d="M.5.500h15v10H.5z" fill="#2c5fb4" stroke="#b5c7df" /><path d="M1 10L15 1v9z" fill="#6b9be0" /><path d="M3 12h9v2H3z" fill="#b5c7df" /></svg>
        </button>
        <button aria-label="Reproductor multimedia">
          <svg width="16" height="16" viewBox="0 0 16 16"><path d="M0 0h16v16H0z" fill="#4db1e4" /><circle cx="8" cy="8" r="6.500" fill="#f28b1d" /><path d="M6 4l5.500 4L6 12z" fill="#fff" /></svg>
        </button>
        <button aria-label="Más accesos" className="self-start pl-[8px]">
          <svg width="9" height="7" viewBox="0 0 9 7" fill="none" stroke="#fff" strokeWidth="1.400"><path d="M1 .5l3 3-3 3M5 .5l3 3-3 3" /></svg>
        </button>
      </div>
      <div className="flex gap-1">
        {TASKS.map(({ label, icon, active }) => (
          <button
            key={label}
            className={`flex h-[27px] w-[156px] items-center gap-[3px] rounded-sm border pl-[7px] text-[12px] whitespace-nowrap ${
              active
                ? 'border-[#62705a] bg-linear-to-b from-[#2a2f28] to-black pt-[2px]'
                : 'border-[#7d8877] bg-linear-to-b from-[#9ba396] via-[#4b5745] via-48% to-[#051a00] to-52%'
            }`}
          >
            {icon}
            {label}
          </button>
        ))}
      </div>
      <div className="ml-auto flex items-center pr-[14px] text-[12px]">
        <span className="pr-[16px] pb-1">ES</span>
        <button aria-label="Mostrar iconos ocultos" className="pr-[8px]">
          <svg width="7" height="8" viewBox="0 0 7 8" fill="none" stroke="#fff" strokeWidth="1.800"><path d="M6 1L2 4l4 3" /></svg>
        </button>
        <GenuineStar size={15} />
        <div className="flex gap-[3px] pr-[13px] pl-[3px] font-['Liberation_Sans',sans-serif] text-[12px] leading-[13px] font-bold text-[#f7f5ec]">
          {['1', 'A', '⇟'].map((key) => (
            <span key={key} className="flex size-[15px] items-center justify-center rounded-xs border border-[#efecdd] bg-[#8f8c7c]">
              {key}
            </span>
          ))}
        </div>
        <svg width="15" height="15" viewBox="0 0 15 15">
          <path d="M5 .5h9v7H5zM1 5h9v7H1z" fill="#1d4f9c" stroke="#dbe6f5" />
          <circle cx="11" cy="11" r="3.500" fill="#2ea3a8" />
          <path d="M3 14h5" stroke="#dbe6f5" strokeWidth="1.500" />
        </svg>
        <svg width="15" height="14" viewBox="0 0 15 14" className="mr-[7px] ml-[3px]" fill="none" stroke="#e8eee4">
          <path d="M1 5h2.500L7 1v12L3.500 9H1z" fill="#fff" />
          <path d="M9 5q1.500 2 0 4M11 3q3 4 0 8M13 2q3 5 0 10" />
        </svg>
        <time>16:54</time>
      </div>
    </div>
  );
}

export default function App() {
  return (
    <div className="flex h-screen flex-col overflow-hidden bg-[#bfdbff] font-['Noto_Sans','Open_Sans',sans-serif]">
      <TitleBar />
      <RibbonTabs />
      <Ribbon />
      <FormulaBar />
      <main className="flex min-h-0 flex-1 pr-[5px]">
        <Sheet />
        <VerticalScroll />
      </main>
      <SheetBar />
      <StatusBar />
      <Taskbar />
    </div>
  );
}
